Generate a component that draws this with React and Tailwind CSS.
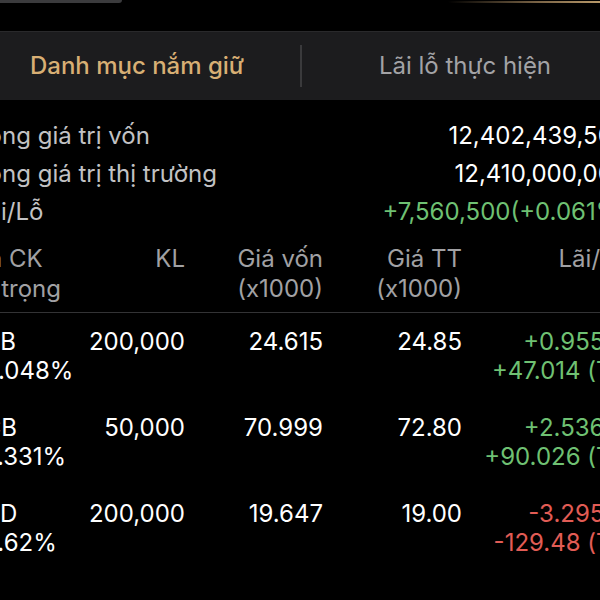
import React from "react";

const rows = [
  { code: "TCB", w: "40.048%", kl: "200,000", von: "24.615", tt: "24.85", p: "+0.955%", v: "+47.014 (Tr)", up: true },
  { code: "VCB", w: "29.331%", kl: "50,000", von: "70.999", tt: "72.80", p: "+2.536%", v: "+90.026 (Tr)", up: true },
  { code: "PVD", w: "30.62%", kl: "200,000", von: "19.647", tt: "19.00", p: "-3.295%", v: "-129.48 (Tr)", up: false },
];

export default function App() {
  return (
    <div className="w-[600px] h-[600px] overflow-hidden bg-black font-['Inter',sans-serif] text-[24px]">
      <div className="-ml-[26px] w-[654px]">
        <div className="h-[31px] flex justify-between items-start">
          <div className="w-[148px] h-[3px] bg-[#3b3b3d] rounded-br-[3px]" />
          <div className="w-[180px] h-[2px] mt-px bg-gradient-to-r from-transparent via-[#7a6446] to-[#d6b27a]" />
        </div>
        <div className="h-[69px] bg-[#1c1c1e] border-t border-[#29292b] flex items-center">
          <div className="flex-1 text-center text-[#d8af74] font-medium">Danh mục nắm giữ</div>
          <div className="w-[2px] h-[42px] bg-[#3a3a3c]" />
          <div className="flex-1 text-center text-[#a3a3a6]">Lãi lỗ thực hiện</div>
        </div>
        <div className="mt-[17px]">
          <div className="h-[38px] flex justify-between items-center">
            <span className="text-[#c2c2c4]">Tổng giá trị vốn</span>
            <span className="text-white">12,402,439,500</span>
          </div>
          <div className="h-[38px] flex justify-between items-center">
            <span className="text-[#c2c2c4]">Tổng giá trị thị trường</span>
            <span className="text-white">12,410,000,000</span>
          </div>
          <div className="h-[38px] flex justify-between items-center">
            <span className="text-[#c2c2c4]">Lãi/Lỗ</span>
            <span className="text-[#6fc173]">+7,560,500(+0.061%)</span>
          </div>
        </div>
        <div className="mt-[13px] -ml-[7px] pb-[8px] border-b border-[#333335] grid grid-cols-[107px_111px_138px_139px_166px] leading-[30px] text-[#a1a1a4]">
          <div>
            <div>Mã CK</div>
            <div>Tỷ trọng</div>
          </div>
          <div className="text-right">KL</div>
          <div className="text-right">
            <div>Giá vốn</div>
            <div>(x1000)</div>
          </div>
          <div className="text-right">
            <div>Giá TT</div>
            <div>(x1000)</div>
          </div>
          <div className="text-right">Lãi/Lỗ</div>
        </div>
        {rows.map((r) => (
          <div key={r.code} className="-ml-[6px] py-[14px] grid grid-cols-[106px_111px_138px_139px_166px] leading-[29px] text-white">
            <div>
              <div>{r.code}</div>
              <div>{r.w}</div>
            </div>
            <div className="text-right">{r.kl}</div>
            <div className="text-right">{r.von}</div>
            <div className="text-right">{r.tt}</div>
            <div className={"text-right " + (r.up ? "text-[#6fc173]" : "text-[#e25c55]")}>
              <div>{r.p}</div>
              <div>{r.v}</div>
            </div>
          </div>
        ))}
      </div>
    </div>
  );
}
